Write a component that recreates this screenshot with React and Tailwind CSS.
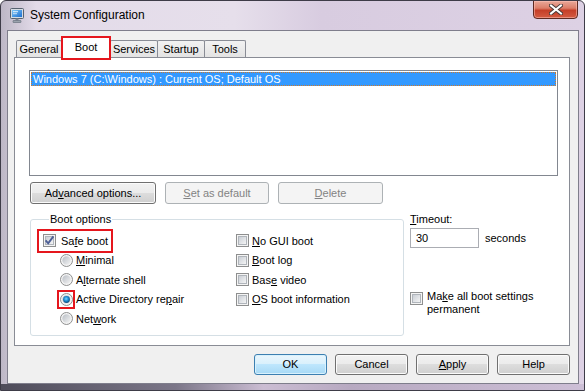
import React from "react";

function Box({ checked }) {
  return (
    <svg width="13" height="13" viewBox="0 0 13 13" className="flex-none block">
      <defs>
        <linearGradient id="cbg" x1="0" y1="0" x2="1" y2="1">
          <stop offset="0" stopColor="#c7ccd3" />
          <stop offset="1" stopColor="#f7f7f7" />
        </linearGradient>
      </defs>
      <rect x="0.5" y="0.5" width="12" height="12" fill="#f4f4f4" stroke="#8e8f8f" />
      <rect x="2.5" y="2.5" width="8" height="8" fill="url(#cbg)" stroke="#b0b5bb" />
      {checked && (
        <path d="M2.6 6.4 L5.2 9.3 L10.4 2.4" fill="none" stroke="#4c5e95" strokeWidth="1.9" />
      )}
    </svg>
  );
}

function Radio({ checked }) {
  return (
    <svg width="13" height="13" viewBox="0 0 13 13" className="flex-none block">
      <defs>
        <linearGradient id="rbg" x1="0" y1="0" x2="1" y2="1">
          <stop offset="0" stopColor="#b9bec5" />
          <stop offset="1" stopColor="#f4f4f4" />
        </linearGradient>
        <radialGradient id="rsel" cx="0.45" cy="0.4" r="0.6">
          <stop offset="0" stopColor="#7fd6ff" />
          <stop offset="0.55" stopColor="#1b8ad0" />
          <stop offset="1" stopColor="#0d4a7c" />
        </radialGradient>
      </defs>
      <circle cx="6.5" cy="6.5" r="6" fill="#f4f4f4" stroke="#8e8f8f" />
      <circle cx="6.5" cy="6.5" r="4.2" fill="url(#rbg)" />
      {checked && <circle cx="6.5" cy="6.5" r="3.4" fill="url(#rsel)" />}
    </svg>
  );
}

function U({ children }) {
  return <span className="underline underline-offset-[1px]">{children}</span>;
}

function Btn({ children, disabled, def, className = "" }) {
  const base =
    "flex items-center justify-center rounded-[3px] border leading-[13px] flex-none ";
  const style = disabled
    ? "border-[#adb2b5] bg-[#f4f4f4] text-[#838383]"
    : def
    ? "border-[#3c7fb1] bg-[linear-gradient(#eaf6fd_0%,#d9f0fc_49%,#bee6fd_50%,#a7d9f5_100%)] shadow-[inset_0_0_0_1px_#d8f1fd]"
    : "border-[#707070] bg-[linear-gradient(#f2f2f2_0%,#ebebeb_49%,#dddddd_50%,#cfcfcf_100%)] shadow-[inset_0_0_0_1px_#fbfbfb]";
  return <div className={base + style + " " + className}>{children}</div>;
}

function AppIcon() {
  return (
    <svg width="15" height="15" viewBox="0 0 15 15" className="block">
      <defs>
        <linearGradient id="scr" x1="0" y1="0" x2="1" y2="1">
          <stop offset="0" stopColor="#7cc6f7" />
          <stop offset="1" stopColor="#1d6fd0" />
        </linearGradient>
      </defs>
      <rect x="0.5" y="0.5" width="13" height="10" rx="1" fill="#d6dce3" stroke="#56616f" />
      <rect x="2" y="2" width="10" height="7" fill="url(#scr)" />
      <rect x="3" y="3.2" width="5" height="1" fill="#ffffff" opacity="0.85" />
      <rect x="3" y="5.2" width="4" height="1" fill="#ffffff" opacity="0.7" />
      <rect x="5.5" y="10.5" width="3" height="2" fill="#7a8592" />
      <rect x="3" y="12.5" width="8" height="2" rx="0.5" fill="#9aa3ad" stroke="#5d6773" strokeWidth="0.6" />
    </svg>
  );
}

function CloseX() {
  return (
    <svg width="14" height="11" viewBox="0 0 14 11" className="block">
      <path d="M2 1.5 L12 9.5 M12 1.5 L2 9.5" stroke="#4a3a38" strokeWidth="4" strokeLinecap="square" />
      <path d="M2 1.5 L12 9.5 M12 1.5 L2 9.5" stroke="#ffffff" strokeWidth="2" strokeLinecap="square" />
    </svg>
  );
}

function Tab({ label, w }) {
  return (
    <div
      className={
        "h-[17px] -ml-px first:ml-0 border border-b-0 border-[#898c95] rounded-t-[2px] bg-[linear-gradient(#f2f2f2,#e3e3e3)] flex items-center justify-center leading-[13px] " +
        w
      }
    >
      {label}
    </div>
  );
}

export default function App() {
  return (
    <div className="w-[585px] h-[391px] flex flex-col overflow-hidden rounded-t-[6px] border border-[#3e3c48] bg-[linear-gradient(90deg,#bdb7c6_0%,#e3dbe9_6%,#e6dfeb_40%,#d8cce0_55%,#ddd1e4_100%)] font-['Liberation_Sans',Arial,sans-serif] text-[11px] text-black">
      {/* Title bar */}
      <div className="h-[29px] flex items-start flex-none">
        <div className="mt-[7px] ml-[9px]">
          <AppIcon />
        </div>
        <div className="ml-[5px] mt-[7px] text-[12px] leading-[15px] text-black">
          System Configuration
        </div>
        <div className="ml-auto mr-[6px] -mt-px w-[45px] h-[19px] rounded-b-[4px] border border-[#5e2a22] bg-[linear-gradient(#e9a899_0%,#dc7e69_42%,#c53f28_55%,#d45b42_100%)] shadow-[inset_0_0_0_1px_rgba(255,200,190,0.5)] flex items-center justify-center">
          <CloseX />
        </div>
      </div>

      {/* Client area */}
      <div className="ml-[6px] w-[572px] h-[354px] flex-none border border-[#7f7e8c] bg-[#f0f0f0] flex flex-col">
        {/* Tabs */}
        <div className="h-[26px] flex items-end pl-[8px] flex-none">
          <Tab label="General" w="w-[46px]" />
          <div className="relative z-10 -ml-px -mb-[3px] w-[50px] h-[24px] border-2 border-[#e5161d] bg-white flex items-start justify-center pt-[3px] leading-[13px]">
            Boot
          </div>
          <Tab label="Services" w="w-[48px]" />
          <Tab label="Startup" w="w-[48px]" />
          <Tab label="Tools" w="w-[42px]" />
        </div>

        {/* Panel */}
        <div className="ml-[6px] w-[556px] h-[289px] flex-none border border-[#898c95] bg-white flex flex-col">
          {/* List */}
          <div className="mt-[12px] ml-[14px] w-[529px] h-[106px] border border-[#828790] bg-white p-px">
            <div className="h-[14px] border border-dotted border-[#d07a2a] bg-[#3399ff] text-white leading-[12px] pl-px">
              Windows 7 (C:\Windows) : Current OS; Default OS
            </div>
          </div>

          {/* Buttons */}
          <div className="mt-[6px] ml-[15px] flex gap-[9px]">
            <Btn className="w-[126px] h-[22px]">
              Ad<U>v</U>anced options...
            </Btn>
            <Btn disabled className="w-[104px] h-[22px]">
              <U>S</U>et as default
            </Btn>
            <Btn disabled className="w-[105px] h-[22px]">
              <U>D</U>elete
            </Btn>
          </div>

          {/* Options */}
          <div className="mt-[8px] ml-[15px] flex">
            <fieldset className="w-[374px] border border-[#d5dfe5] rounded-[3px] pl-[12px] pt-[5px] pb-[6px]">
              <legend className="ml-[6px] px-[1px] leading-[14px]">Boot options</legend>
              <div className="grid grid-cols-[193px_1fr] grid-rows-[repeat(5,19.5px)]">
                <div className="flex items-center">
                  <div className="-ml-[6px] h-[24px] flex items-center border-2 border-[#e5161d] pl-[4px] pr-[3px] gap-[5px]">
                    <Box checked />
                    <span>
                      Sa<U>f</U>e boot
                    </span>
                  </div>
                </div>
                <div className="flex items-center gap-[3px]">
                  <Box />
                  <span>
                    <U>N</U>o GUI boot
                  </span>
                </div>

                <div className="flex items-center pl-[17px] gap-[3px]">
                  <Radio />
                  <span>
                    <U>M</U>inimal
                  </span>
                </div>
                <div className="flex items-center gap-[3px]">
                  <Box />
                  <span>
                    <U>B</U>oot log
                  </span>
                </div>

                <div className="flex items-center pl-[17px] gap-[3px]">
                  <Radio />
                  <span>
                    A<U>l</U>ternate shell
                  </span>
                </div>
                <div className="flex items-center gap-[3px]">
                  <Box />
                  <span>
                    Bas<U>e</U> video
                  </span>
                </div>

                <div className="flex items-center pl-[14px] gap-[1px]">
                  <div className="w-[18px] h-[19px] border-2 border-[#e5161d] flex items-center justify-center">
                    <Radio checked />
                  </div>
                  <span>
                    Active Directory re<U>p</U>air
                  </span>
                </div>
                <div className="flex items-center gap-[3px]">
                  <Box />
                  <span>
                    <U>O</U>S boot information
                  </span>
                </div>

                <div className="flex items-center pl-[17px] gap-[3px]">
                  <Radio />
                  <span>
                    Net<U>w</U>ork
                  </span>
                </div>
                <div />
              </div>
            </fieldset>

            <div className="ml-[6px] flex flex-col">
              <div className="leading-[14px]">
                <U>T</U>imeout:
              </div>
              <div className="mt-[2px] flex items-center">
                <div className="w-[69px] h-[20px] border border-[#abadb3] border-t-[#abadb3] bg-white flex items-center pl-[5px] leading-[13px]">
                  30
                </div>
                <span className="ml-[6px]">seconds</span>
              </div>
              <div className="mt-[42px] flex items-start gap-[4px]">
                <div className="mt-[2px]">
                  <Box />
                </div>
                <div className="leading-[13px]">
                  Ma<U>k</U>e all boot settings
                  <br />
                  permanent
                </div>
              </div>
            </div>
          </div>
        </div>

        {/* Bottom buttons */}
        <div className="mt-[8px] flex justify-end gap-[8px] pr-[8px]">
          <Btn def className="w-[73px] h-[21px]">
            OK
          </Btn>
          <Btn className="w-[73px] h-[21px]">Cancel</Btn>
          <Btn className="w-[73px] h-[21px]">
            <U>A</U>pply
          </Btn>
          <Btn className="w-[73px] h-[21px]">Help</Btn>
        </div>
      </div>
      <div className="flex-1 bg-[linear-gradient(90deg,#4e4c5a_0%,#7b7688_30%,#cbbdd3_45%,#b7a9c1_60%,#cdbfd6_100%)]" />
    </div>
  );
}
